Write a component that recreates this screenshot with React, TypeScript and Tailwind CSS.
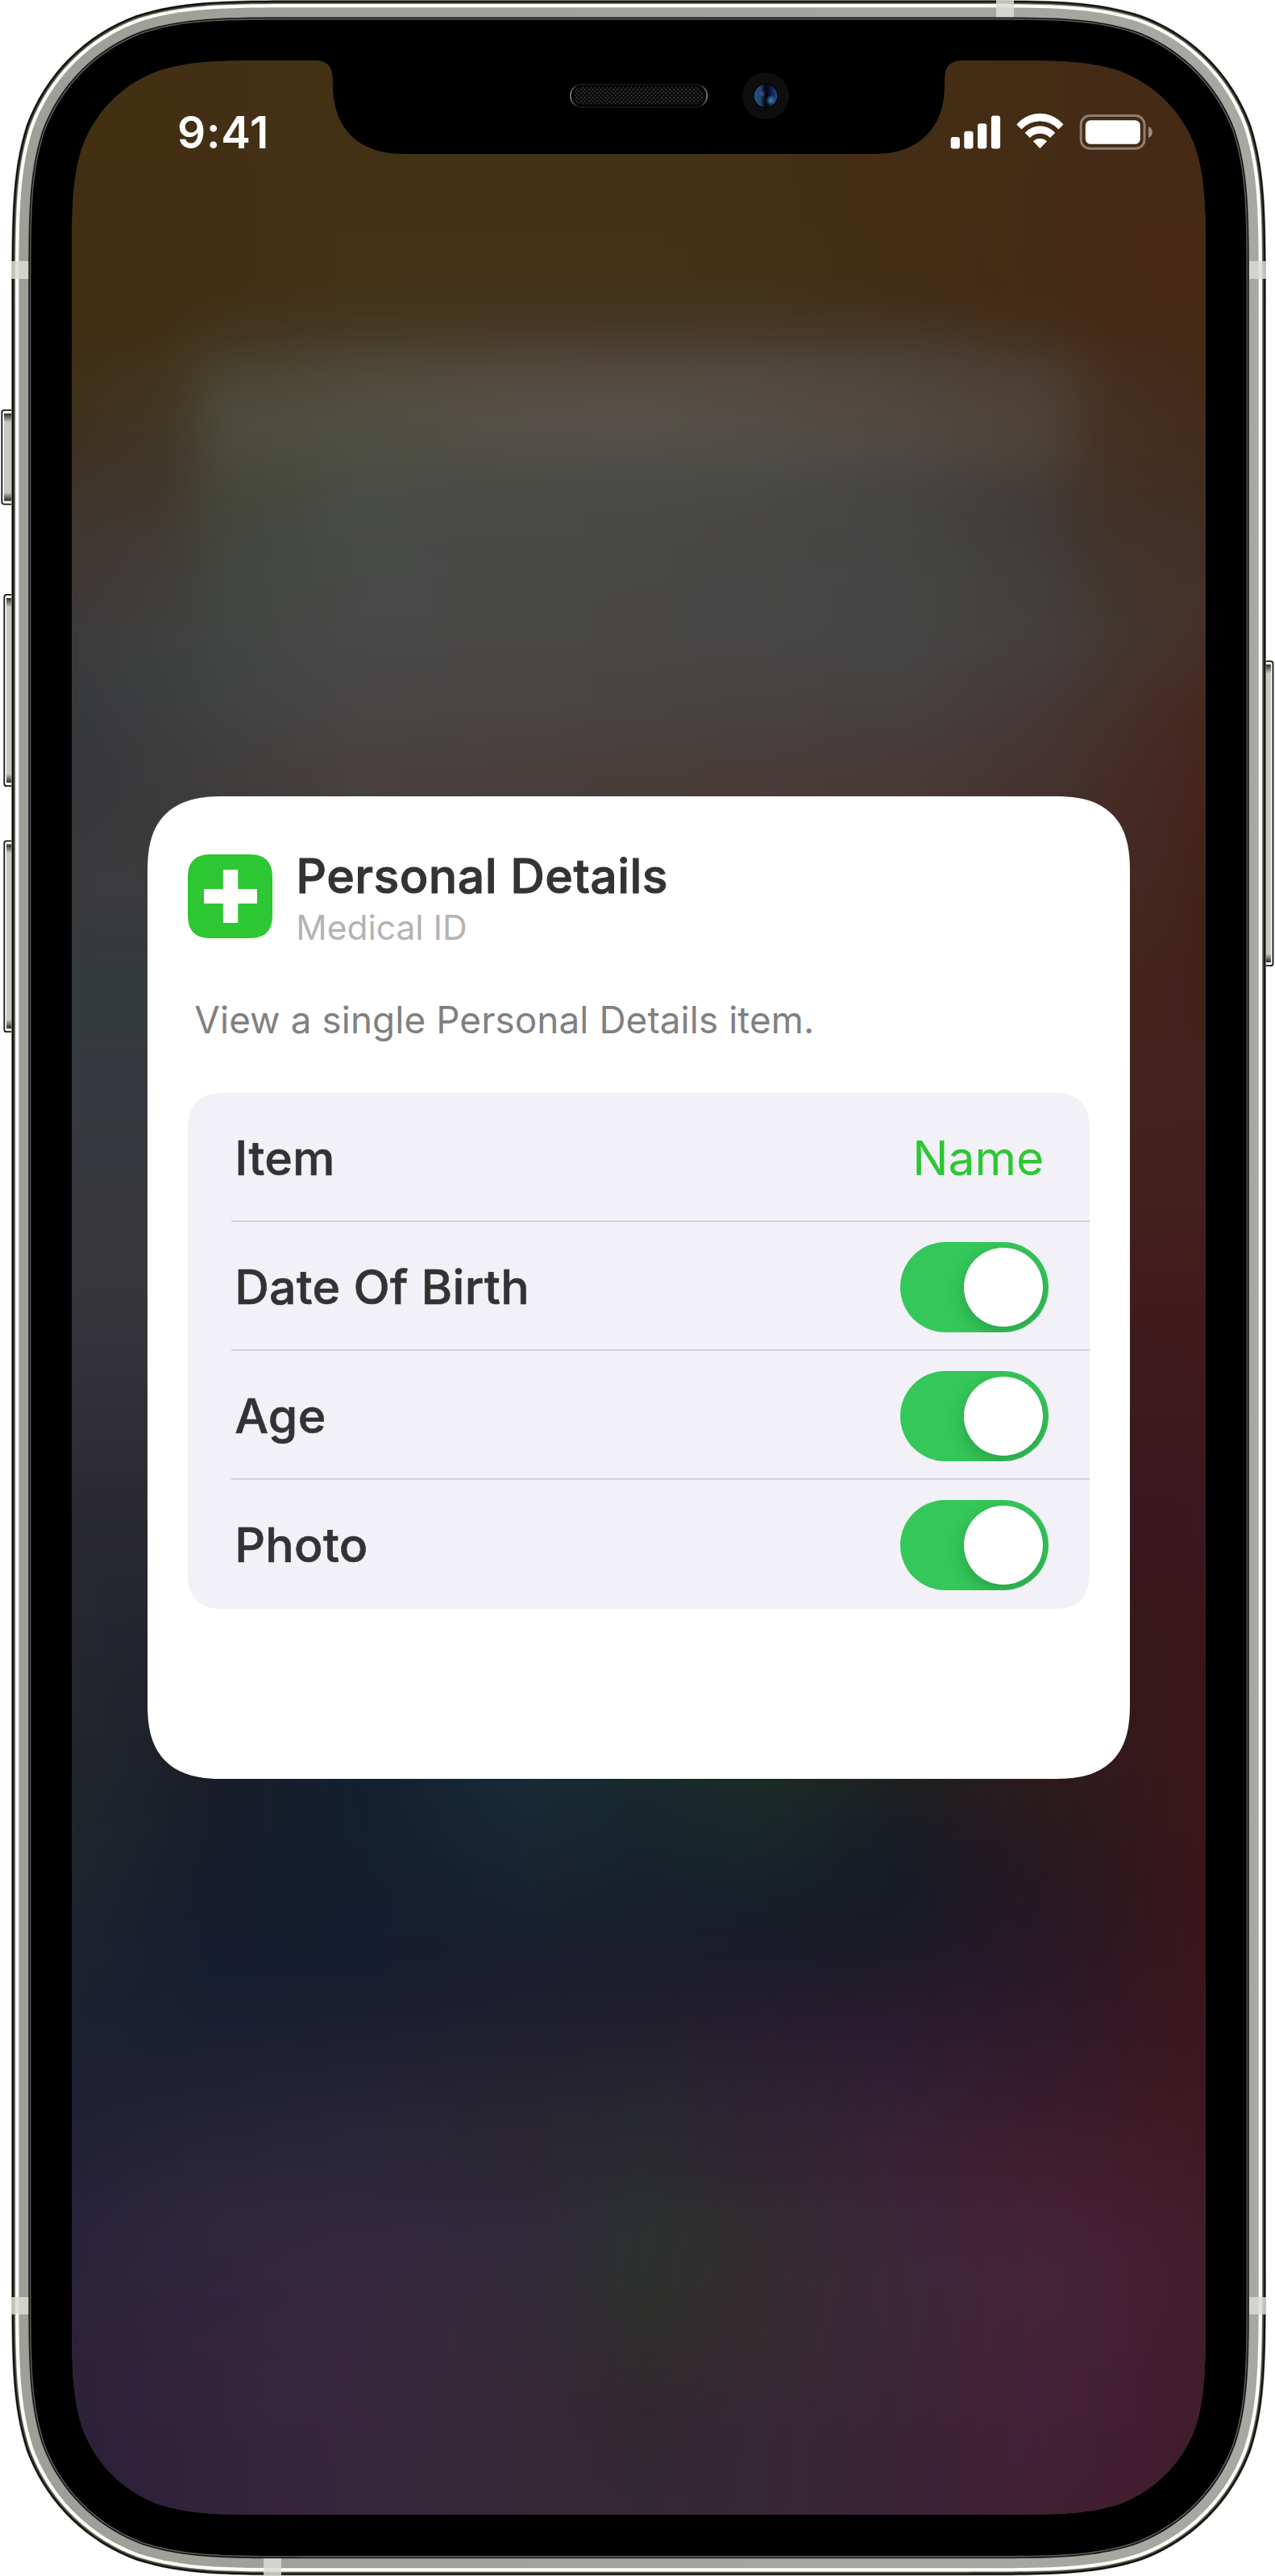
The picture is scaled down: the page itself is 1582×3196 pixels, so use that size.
import type { ReactNode } from 'react';

/** Rounded rectangle with continuous-curvature corners. */
function continuousRect(x0: number, y0: number, x1: number, y1: number, r: number) {
  const a = 1.52866 * r, b = 1.08849 * r, c = 0.86841 * r, d = 0.63149 * r;
  const e = 0.07491 * r, f = 0.37282 * r, g = 0.16906 * r;
  return [
    `M${x0 + a} ${y0}H${x1 - a}`,
    `C${x1 - b} ${y0} ${x1 - c} ${y0} ${x1 - d} ${y0 + e}`,
    `C${x1 - f} ${y0 + g} ${x1 - g} ${y0 + f} ${x1 - e} ${y0 + d}`,
    `C${x1} ${y0 + c} ${x1} ${y0 + b} ${x1} ${y0 + a}`,
    `V${y1 - a}`,
    `C${x1} ${y1 - b} ${x1} ${y1 - c} ${x1 - e} ${y1 - d}`,
    `C${x1 - g} ${y1 - f} ${x1 - f} ${y1 - g} ${x1 - d} ${y1 - e}`,
    `C${x1 - c} ${y1} ${x1 - b} ${y1} ${x1 - a} ${y1}`,
    `H${x0 + a}`,
    `C${x0 + b} ${y1} ${x0 + c} ${y1} ${x0 + d} ${y1 - e}`,
    `C${x0 + f} ${y1 - g} ${x0 + g} ${y1 - f} ${x0 + e} ${y1 - d}`,
    `C${x0} ${y1 - c} ${x0} ${y1 - b} ${x0} ${y1 - a}`,
    `V${y0 + a}`,
    `C${x0} ${y0 + b} ${x0} ${y0 + c} ${x0 + e} ${y0 + d}`,
    `C${x0 + g} ${y0 + f} ${x0 + f} ${y0 + g} ${x0 + d} ${y0 + e}`,
    `C${x0 + c} ${y0} ${x0 + b} ${y0} ${x0 + a} ${y0}Z`,
  ].join('');
}

const FRAME_LAYERS: [number, string][] = [
  [0, '#a3a49c'],
  [0.7, '#080a06'],
  [2.3, '#2b2d25'],
  [3.3, '#4d4e44'],
  [4.3, '#8f9085'],
  [5.1, '#fdfdfa'],
  [9.3, 'url(#steel)'],
  [21.2, '#2a2a27'],
  [22, '#050505'],
  [22.8, '#5c5c5c'],
  [24.4, '#000000'],
];

const BUTTONS = [
  { x: 1.5, y: 508, w: 16, h: 118.5 },
  { x: 4.5, y: 737, w: 14, h: 239 },
  { x: 4.5, y: 1042.5, w: 14, h: 238.5 },
  { x: 1566, y: 819.5, w: 14.3, h: 379.5, right: true },
];

const BANDS: [number, number, number, number][] = [
  [14, 324, 21.2, 22],
  [14, 2850, 21.2, 21.5],
  [1550, 324, 21.2, 22],
  [1550, 2850, 21.2, 21.5],
  [1236, 0, 22, 21.2],
  [327, 3174.3, 22, 21.2],
];

function PhoneBody() {
  return (
    <svg className="absolute inset-0" width="1582" height="3196" viewBox="0 0 1582 3196" aria-hidden="true">
      <defs>
        <linearGradient id="steel" x1="0" x2="1" y1="0" y2="0">
          <stop offset="0" stopColor="#9e9f97" />
          <stop offset="1" stopColor="#a7a8a1" />
        </linearGradient>
        <linearGradient id="cap-top" x1="0" x2="0" y1="0" y2="1">
          <stop offset="0" stopColor="#2c2d29" />
          <stop offset="1" stopColor="#c7c8c2" />
        </linearGradient>
        <linearGradient id="cap-bottom" x1="0" x2="0" y1="0" y2="1">
          <stop offset="0" stopColor="#c7c8c2" />
          <stop offset="1" stopColor="#2c2d29" />
        </linearGradient>
      </defs>
      {BUTTONS.map((b) => {
        const faceX = b.right ? b.x : b.x + 3.5;
        const faceW = b.w - 3.5;
        return (
          <g key={b.y}>
            <rect x={b.x + 0.8} y={b.y + 0.8} width={b.w - 1.6} height={b.h - 1.6} rx="3" fill="#fbfbf8" stroke="#141816" strokeWidth="1.8" />
            <rect x={faceX} y={b.y + 5} width={faceW} height={b.h - 10} fill="#c7c8c2" />
            <rect x={faceX} y={b.y + 5} width={faceW} height="11" fill="url(#cap-top)" />
            <rect x={faceX} y={b.y + b.h - 16} width={faceW} height="11" fill="url(#cap-bottom)" />
          </g>
        );
      })}
      {FRAME_LAYERS.map(([inset, fill]) => (
        <path key={inset} d={continuousRect(14 + inset, inset, 1571 - inset, 3195.5 - inset, 246 - inset)} fill={fill} />
      ))}
      {BANDS.map(([x, y, w, h]) => (
        <rect key={`${x}-${y}`} x={x} y={y} width={w} height={h} fill="#dcdcd3" opacity="0.85" />
      ))}
    </svg>
  );
}

function Notch() {
  return (
    <svg className="absolute inset-x-0 top-0" width="1407" height="118" viewBox="89 75 1407 118" aria-hidden="true">
      <defs>
        <pattern id="mesh" width="5" height="5" patternUnits="userSpaceOnUse">
          <rect width="5" height="5" fill="#040404" />
          <rect x="0" y="0" width="2" height="2" fill="#333333" />
          <rect x="2.5" y="2.5" width="2" height="2" fill="#333333" />
        </pattern>
        <linearGradient id="rim" x1="0" x2="1" y1="0" y2="0">
          <stop offset="0" stopColor="#7a7a7a" />
          <stop offset="0.05" stopColor="#161616" />
          <stop offset="0.95" stopColor="#161616" />
          <stop offset="1" stopColor="#7a7a7a" />
        </linearGradient>
        <linearGradient id="lens" x1="0" x2="1" y1="0" y2="0">
          <stop offset="0" stopColor="#1d5487" />
          <stop offset="0.28" stopColor="#24466b" />
          <stop offset="0.48" stopColor="#05060f" />
          <stop offset="0.6" stopColor="#070a20" />
          <stop offset="0.85" stopColor="#14306a" />
          <stop offset="1" stopColor="#1c4f86" />
        </linearGradient>
        <radialGradient id="glint">
          <stop offset="0" stopColor="#3f87ab" />
          <stop offset="1" stopColor="#3f87ab" stopOpacity="0" />
        </radialGradient>
        <radialGradient id="violet">
          <stop offset="0" stopColor="#5b3d8c" />
          <stop offset="1" stopColor="#5b3d8c" stopOpacity="0" />
        </radialGradient>
      </defs>
      <path
        d="M390 74V75C406 75 412.4 82 412.8 97C412.9 102 413 106 413.2 112C415 158 444 191 500 191H1085C1141 191 1170 158 1171.8 112C1172 106 1172.1 102 1172.2 97C1172.6 82 1179 75 1195 75V74Z"
        fill="#000"
      />
      <rect x="707.8" y="104.8" width="169.5" height="28" rx="14" fill="#030303" stroke="url(#rim)" strokeWidth="1.7" />
      <rect x="712" y="107.5" width="161" height="22.5" rx="11.2" fill="url(#mesh)" />
      <circle cx="950" cy="119" r="29" fill="#0e0e0e" />
      <circle cx="950" cy="119" r="15.5" fill="#030308" />
      <circle cx="950" cy="119" r="14.3" fill="url(#lens)" />
      <circle cx="956.5" cy="124.5" r="6.5" fill="url(#glint)" />
      <circle cx="945.5" cy="116.5" r="4.5" fill="url(#violet)" />
    </svg>
  );
}

const COLUMN_X = [0, 190, 361, 571, 711, 841, 1031, 1205, 1407];

/** How far the backdrop bleeds past the screen so its blur has no visible edge. */
const BLEED = 40;

const BACKDROP: [number, string[]][] = [
  [-BLEED, ['#443114', '#443115', '#443115', '#443115', '#443115', '#443014', '#452e15', '#452d15', '#452b15']],
  [255, ['#422f13', '#423014', '#433217', '#433217', '#433217', '#433116', '#432e15', '#442b15', '#462a15']],
  [310, ['#412f14', '#423118', '#44341b', '#44341d', '#44341e', '#44331d', '#43301a', '#442c16', '#462a15']],
  [345, ['#412f15', '#433620', '#473d2a', '#493c2c', '#493c2e', '#493c2d', '#473a2c', '#43311f', '#452a16']],
  [385, ['#403018', '#484331', '#4f493a', '#534b3e', '#544a3f', '#524940', '#4e443b', '#4b3c31', '#432b19']],
  [440, ['#3f311c', '#4d4c3d', '#515042', '#56514a', '#56524a', '#544e47', '#52483f', '#4e4238', '#432c1c']],
  [485, ['#3d3123', '#4b4a3c', '#4e4f45', '#514f48', '#514f49', '#504f48', '#4e4945', '#4c4139', '#432d1e']],
  [530, ['#3f3429', '#454739', '#4a4c46', '#4b4b46', '#4a4a46', '#494945', '#454441', '#423c38', '#432e21']],
  [580, ['#403832', '#43463e', '#494b48', '#494947', '#484846', '#484745', '#444543', '#403b38', '#422f25']],
  [650, ['#3e3836', '#434640', '#484a48', '#484948', '#484847', '#464746', '#444644', '#423f3c', '#443128']],
  [725, ['#3b3b3c', '#424544', '#494848', '#494847', '#484746', '#484646', '#454545', '#443f3d', '#452f27']],
  [805, ['#38393b', '#414242', '#484645', '#484543', '#474441', '#464240', '#454140', '#453837', '#45291f']],
  [890, ['#37383b', '#403d3d', '#47403e', '#483e3b', '#493d3a', '#4a3c39', '#493937', '#453331', '#46251e']],
  [1025, ['#3b3a3d', '#3e3a3a', '#47403e', '#483e3b', '#493d3a', '#4a3c39', '#493937', '#443029', '#42231b']],
  [1125, ['#353b3c', '#353b3c', '#404040', '#404040', '#404040', '#404040', '#404040', '#44271f', '#42231c']],
  [1225, ['#363b3e', '#363b3e', '#404040', '#404040', '#404040', '#404040', '#404040', '#44251f', '#42231d']],
  [1325, ['#37393e', '#37393e', '#404040', '#404040', '#404040', '#404040', '#404040', '#43231d', '#44231f']],
  [1425, ['#38383c', '#38383c', '#303030', '#303030', '#303030', '#303030', '#303030', '#42211c', '#42201e']],
  [1525, ['#35353a', '#35353a', '#303030', '#303030', '#303030', '#303030', '#303030', '#401d1e', '#411c1c']],
  [1625, ['#333239', '#333239', '#303030', '#303030', '#303030', '#303030', '#303030', '#3b1b20', '#3f1b1f']],
  [1825, ['#28292e', '#28292e', '#202020', '#202020', '#202020', '#202020', '#202020', '#36181d', '#3b1720']],
  [1925, ['#272730', '#24242e', '#1a2027', '#1a2027', '#1a2027', '#1a2027', '#202020', '#33191c', '#3b171c']],
  [2075, ['#22262c', '#1c1f2a', '#132231', '#1b2c38', '#18292f', '#1c2f29', '#202120', '#321c1d', '#39161a']],
  [2125, ['#22262b', '#191d2a', '#132030', '#1a2b37', '#17282d', '#1b2c27', '#1f2021', '#2d1b1d', '#3a171a']],
  [2205, ['#20252c', '#181d2c', '#141f2f', '#182733', '#17252c', '#19272a', '#181d24', '#281a1f', '#3a161a']],
  [2285, ['#1e232e', '#171c2e', '#151e30', '#18212f', '#181f2c', '#171f29', '#171b25', '#271822', '#3a151a']],
  [2365, ['#1c222f', '#171d31', '#171d30', '#1a1d2e', '#1c1d2b', '#1c1c2a', '#1f1b29', '#291826', '#3b161c']],
  [2445, ['#1c2031', '#1b1f32', '#1d1f31', '#201f2f', '#221f2d', '#261e2e', '#2b1b2e', '#301a29', '#3b161e']],
  [2525, ['#1f2033', '#222135', '#252336', '#27242f', '#27272f', '#2b2431', '#331f33', '#371c2b', '#3e1920']],
  [2605, ['#232137', '#292539', '#2b273a', '#2b2832', '#2a2b2f', '#2f2630', '#3a2234', '#401f2d', '#401b26']],
  [2685, ['#28233b', '#2f283e', '#312840', '#30293a', '#2c3130', '#312d30', '#3c2537', '#442236', '#421e2b']],
  [2765, ['#2a243a', '#30263e', '#36283f', '#312b37', '#2d302d', '#332c2f', '#3d2737', '#442437', '#421f2d']],
  [2845, ['#2c223a', '#34253e', '#38273e', '#342a36', '#2f2c2d', '#352b30', '#3c2635', '#442236', '#421e2d']],
  [2925, ['#2d213a', '#34243e', '#37273d', '#362835', '#32282f', '#352833', '#3b2434', '#432136', '#411d2c']],
  [3045 + BLEED, ['#2b203a', '#34233c', '#36263c', '#352835', '#332835', '#362735', '#3b2335', '#412033', '#401b2b']],
];

/** Share of the screen-edge colour kept just outside the frosted panel. */
const edgeShare = (y: number) => (y < 600 ? 80 : y < 700 ? 65 : y < 900 ? 45 : 35);

function rowGradient(y: number, colors: string[]) {
  const share = edgeShare(y);
  const stops = colors.map((c, i) => `${c} ${COLUMN_X[i] + BLEED}px`);
  stops.splice(1, 0, `color-mix(in srgb, ${colors[0]} ${share}%, ${colors[1]}) ${118 + BLEED}px`);
  stops.splice(-1, 0, `color-mix(in srgb, ${colors[8]} ${share}%, ${colors[7]}) ${1288 + BLEED}px`);
  return `linear-gradient(to right, ${stops.join(', ')})`;
}

/** Frosted wallpaper: each band fades from its own colour row to the next one. */
function Backdrop() {
  return (
    <div className="absolute -inset-10 flex flex-col blur-[16px]" aria-hidden="true">
      {BACKDROP.slice(0, -1).map(([y, colors], i) => {
        const [nextY, nextColors] = BACKDROP[i + 1];
        return (
          <div key={y} className="shrink-0" style={{ height: nextY - y, backgroundImage: rowGradient(y, colors) }}>
            <div
              className="h-full w-full [mask-image:linear-gradient(to_bottom,transparent,black)]"
              style={{ backgroundImage: rowGradient(nextY, nextColors) }}
            />
          </div>
        );
      })}
    </div>
  );
}

function StatusBar() {
  return (
    <div className="relative flex h-[116px] items-start justify-between pl-[131px] pr-[65px] pt-[59px]">
      <span className="text-[55px] leading-[60px] font-[600] tracking-[0.8px] text-white">9:41</span>
      <svg className="mt-[2px]" width="253" height="58" viewBox="1178 136 253 58" aria-label="Signal, Wi-Fi and battery">
        <g fill="#fff">
          <rect x="1179.7" y="170" width="11.2" height="14.6" rx="3" />
          <rect x="1196.3" y="162.8" width="11.2" height="21.8" rx="3" />
          <rect x="1213.1" y="153.2" width="11.2" height="31.4" rx="3" />
          <rect x="1229.9" y="143.4" width="11.2" height="41.2" rx="3" />
          <g stroke="#fff" strokeWidth="1" strokeLinejoin="round">
            <path d="M1261.9 154.4A37.6 37.6 0 0 1 1319 154.4L1313.4 160A31 31 0 0 0 1267.5 160Z" />
            <path d="M1272.2 164.8A24.8 24.8 0 0 1 1308.7 164.8L1303 170.4A17.6 17.6 0 0 0 1277.9 170.4Z" />
            <path d="M1282.4 175.2A12.6 12.6 0 0 1 1298.5 175.2L1290.4 183.7Z" />
          </g>
          <rect x="1346.8" y="149.2" width="68" height="29.6" rx="6.5" />
          <path d="M1425 157C1431.5 159.5 1431.5 168.5 1425 171Z" opacity="0.45" />
        </g>
        <rect x="1341.2" y="143.6" width="78.8" height="40.6" rx="11" fill="none" stroke="#fff" strokeWidth="3" opacity="0.4" />
      </svg>
    </div>
  );
}

function Toggle() {
  return (
    <div className="flex h-[111.5px] w-[184px] items-center justify-end overflow-hidden rounded-full bg-[#35c759] pr-[7px]">
      <div className="size-[98px] rounded-full bg-white shadow-[0_8px_22px_rgba(0,0,0,0.2)]" />
    </div>
  );
}

function Row({ label, last, children }: { label: string; last?: boolean; children: ReactNode }) {
  return (
    <div className="h-[160px] pl-[54px]">
      <div
        className={
          last
            ? 'flex h-full items-center justify-between pl-[4px] pr-[50.5px] pt-[3px]'
            : 'flex h-full items-center justify-between border-b-2 border-[#d2d1d7] pl-[4px] pr-[50.5px] pt-[5px]'
        }
      >
        <span className="text-[59px] leading-[70px] font-medium tracking-[0.25px] text-[#333333] [-webkit-text-stroke:0.6px_#333333]">
          {label}
        </span>
        {children}
      </div>
    </div>
  );
}

function DetailsCard() {
  return (
    <section className="relative mx-auto mt-[796.5px] h-[1219.5px] w-[1219.5px] rounded-[95px] bg-white pl-[50.5px] pr-[50.5px] pt-[64px] [corner-shape:superellipse(1.38)]">
      <header className="flex items-start">
        <div className="mt-[8px] flex size-[104.5px] shrink-0 items-center justify-center rounded-[30px] bg-[#2dc733] [corner-shape:superellipse(1.38)]">
          <svg width="66" height="66" viewBox="0 0 66 66" aria-hidden="true">
            <path d="M23.8 0H42.2V24H66V42H42.2V66H23.8V42H0V24H23.8Z" fill="#fff" />
          </svg>
        </div>
        <div className="ml-[29.5px]">
          <h1 className="text-[59px] leading-[70px] font-medium tracking-[0.45px] text-[#333333] [-webkit-text-stroke:1px_#333333]">
            Personal Details
          </h1>
          <p className="mt-1 text-[42.5px] leading-[50px] text-[#b3b3b3]">Medical ID</p>
        </div>
      </header>
      <p className="ml-[8px] mt-[62px] text-[45.8px] leading-[56px] tracking-[0.1px] text-[#808080]">
        View a single Personal Details item.
      </p>
      <div className="mt-[62px] overflow-hidden rounded-[46px] bg-[#f2f1f7] [corner-shape:superellipse(1.38)]">
        <Row label="Item">
          <span className="mr-[6px] text-[58.8px] leading-[70px] text-[#2dc733]">Name</span>
        </Row>
        <Row label="Date Of Birth">
          <Toggle />
        </Row>
        <Row label="Age">
          <Toggle />
        </Row>
        <Row label="Photo" last>
          <Toggle />
        </Row>
      </div>
    </section>
  );
}

export default function App() {
  const screenClip = `path("${continuousRect(0, 0, 1407, 3045, 171)}")`;
  return (
    <main className="relative h-[3196px] w-[1582px] overflow-hidden bg-white pl-[89px] pt-[75px] font-['Inter',sans-serif]">
      <PhoneBody />
      <div className="relative h-[3045px] w-[1407px] bg-[#3c2a20]" style={{ clipPath: screenClip }}>
        <Backdrop />
        <Notch />
        <StatusBar />
        <DetailsCard />
      </div>
    </main>
  );
}
